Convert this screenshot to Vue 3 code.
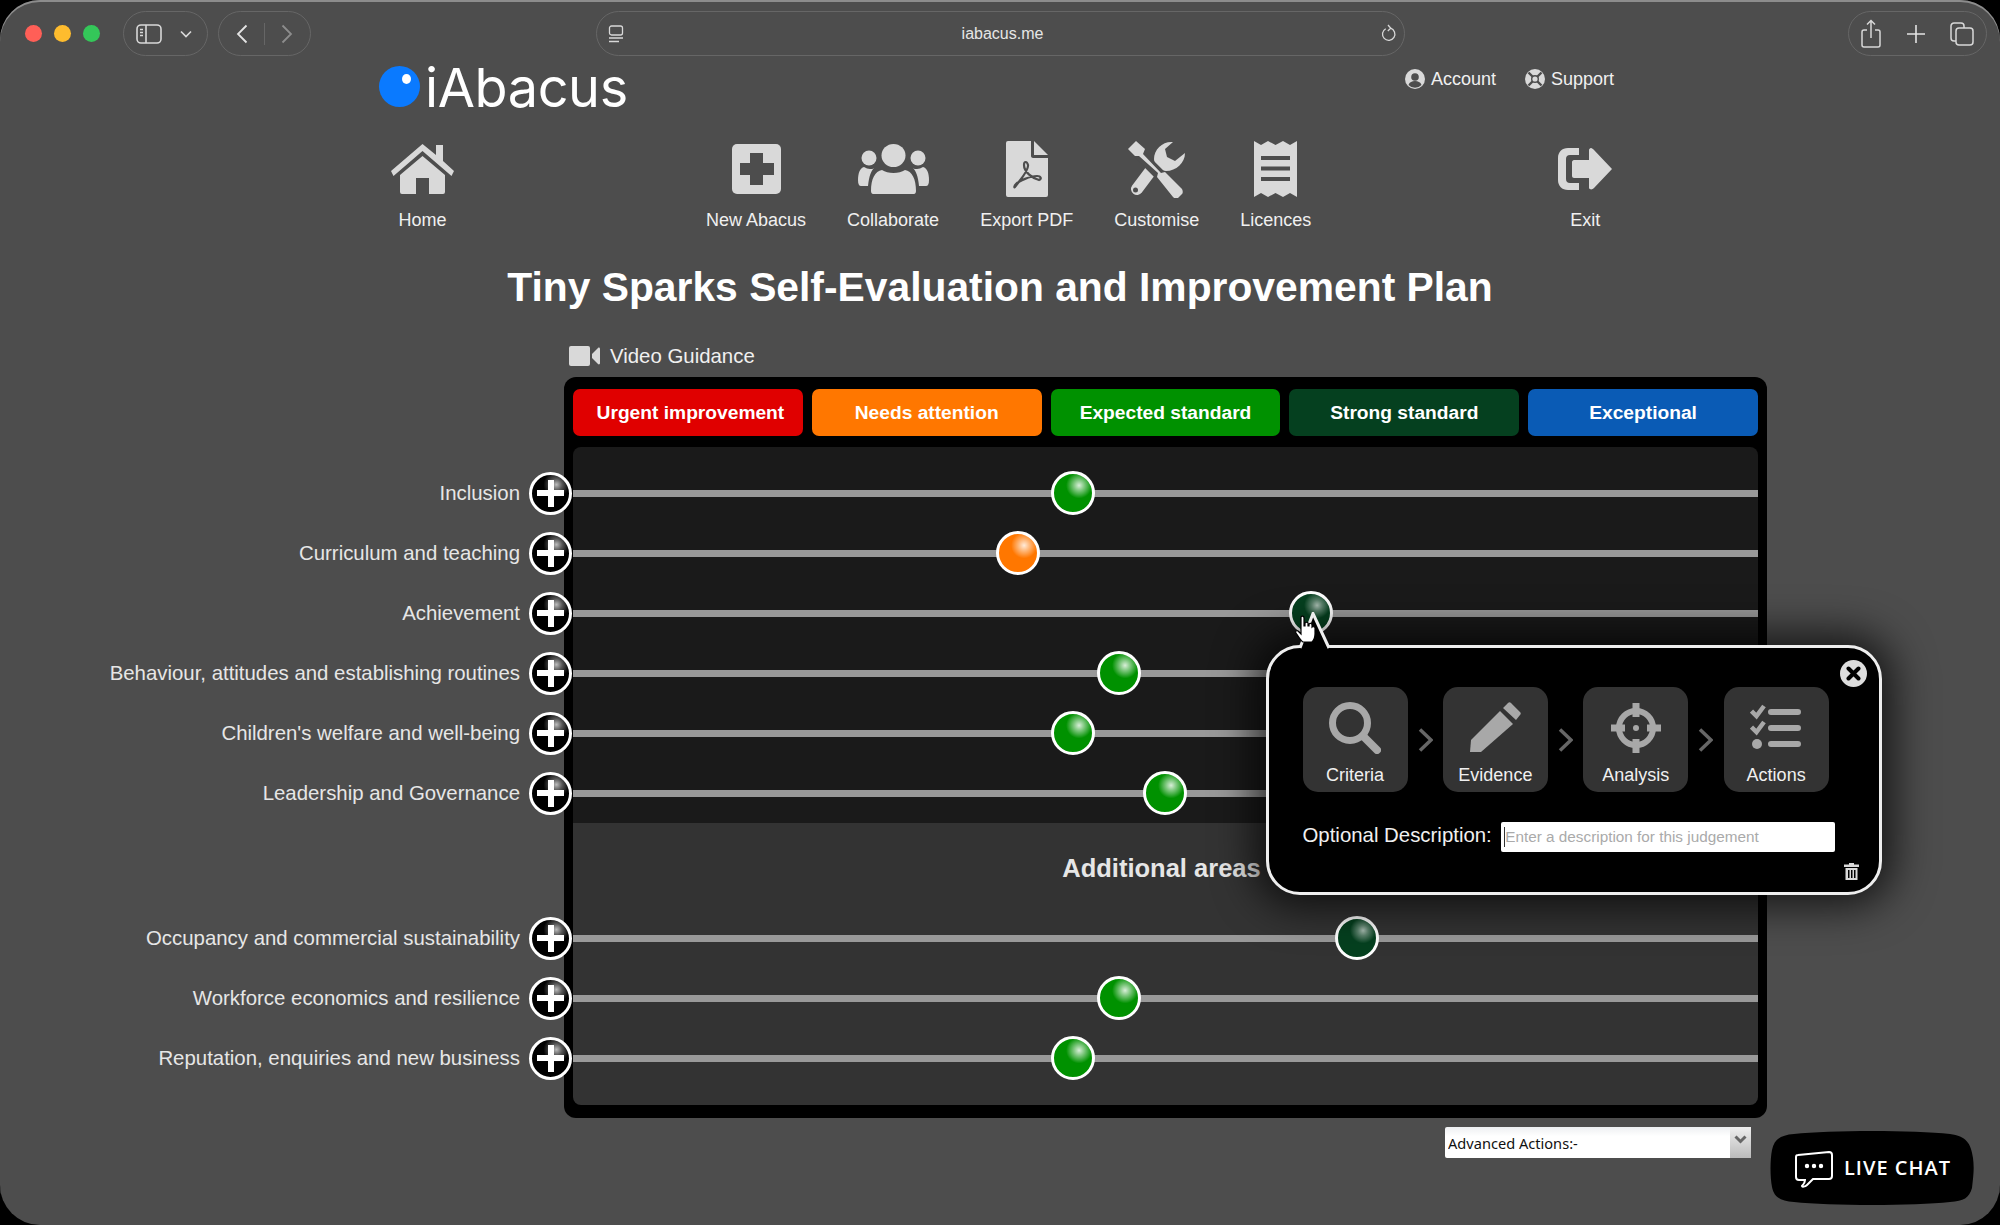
<template>
  <div class="window">
    <header class="toolbar">
      <div class="lights">
        <span class="light red"></span>
        <span class="light yellow"></span>
        <span class="light green"></span>
      </div>
      <div class="pill pill-sidebar">
        <svg width="26" height="22" viewBox="0 0 26 22" fill="none" stroke="#d8d8d8" stroke-width="1.6">
          <rect x="1" y="2" width="24" height="18" rx="4" />
          <path d="M10 2v18" />
          <path d="M4 6.500h3M4 9.500h3M4 12.500h3" stroke-width="1.4" />
        </svg>
        <svg width="12" height="8" viewBox="0 0 12 8" fill="none" stroke="#d8d8d8" stroke-width="1.7">
          <path d="M1 1.500l5 5 5-5" />
        </svg>
      </div>
      <div class="pill pill-nav">
        <svg width="12" height="20" viewBox="0 0 12 20" fill="none" stroke="#e4e4e4" stroke-width="1.8">
          <path d="M10.500 1.500L2 10l8.500 8.500" />
        </svg>
        <span class="pill-sep"></span>
        <svg width="12" height="20" viewBox="0 0 12 20" fill="none" stroke="#8d8d8d" stroke-width="1.8">
          <path d="M1.500 1.500L10 10l-8.500 8.500" />
        </svg>
      </div>
      <div class="pill pill-url">
        <svg width="16" height="18" viewBox="0 0 16 18" fill="none" stroke="#d8d8d8" stroke-width="1.300">
          <rect x="1.500" y="1" width="13" height="9" rx="2" />
          <path d="M1 13h14M1 16.500h10" />
        </svg>
        <span class="url-text">iabacus.me</span>
        <svg width="16" height="19" viewBox="0 0 16 19" fill="none" stroke="#d8d8d8" stroke-width="1.300">
          <path d="M9.500 4.200a6.200 6.200 0 1 1-4.800.5" />
          <path d="M7 1l2.800 3.200L6.800 7" />
        </svg>
      </div>
      <div class="pill pill-actions">
        <svg width="20" height="30" viewBox="0 0 20 30" fill="none" stroke="#d8d8d8" stroke-width="1.500">
          <path d="M6 11H3a2 2 0 0 0-2 2v13a2 2 0 0 0 2 2h14a2 2 0 0 0 2-2V13a2 2 0 0 0-2-2h-3" />
          <path d="M10 19V2M6 5.500L10 1.500l4 4" />
        </svg>
        <svg width="20" height="20" viewBox="0 0 20 20" fill="none" stroke="#e4e4e4" stroke-width="1.600">
          <path d="M10 1v18M1 10h18" />
        </svg>
        <svg width="24" height="24" viewBox="0 0 24 24" fill="none" stroke="#d8d8d8" stroke-width="1.500">
          <path d="M6 19H4a3 3 0 0 1-3-3V4a3 3 0 0 1 3-3h7a3 3 0 0 1 3 3v2" />
          <rect x="6" y="6" width="17" height="17" rx="3" />
        </svg>
      </div>
    </header>

    <div class="brand-row">
      <div class="logo">
        <span class="logo-dot"></span>
        <span class="logo-text">iAbacus</span>
      </div>
      <div class="top-links">
        <a class="top-link">
          <svg width="20" height="20" viewBox="0 0 20 20">
            <circle cx="10" cy="10" r="10" fill="#d9d9d9" />
            <circle cx="10" cy="8" r="3.800" fill="#4d4d4d" />
            <path d="M3.500 16c1-3 3.500-4 6.500-4s5.500 1 6.500 4a9 9 0 0 1-13 0z" fill="#4d4d4d" />
          </svg>
          Account
        </a>
        <a class="top-link">
          <svg width="20" height="20" viewBox="0 0 20 20">
            <circle cx="10" cy="10" r="10" fill="#d9d9d9" />
            <circle cx="10" cy="10" r="4" fill="#4d4d4d" />
            <circle cx="10" cy="10" r="2.600" fill="#d9d9d9" />
            <path d="M3.500 3.500l4 4M16.500 3.500l-4 4M3.500 16.500l4-4M16.500 16.500l-4-4" stroke="#4d4d4d" stroke-width="2.400" />
          </svg>
          Support
        </a>
      </div>
    </div>

    <nav class="main-nav">
      <a class="nav-item nav-home">
        <svg width="63" height="50" viewBox="0 0 63 50" fill="#d9d9d9">
          <path d="M31.500 0L45 11V1h7v16l11 10-2.500 5L31.500 7 2.500 32 0 27z" />
          <path d="M31.500 12L54 31v17a2 2 0 0 1-2 2H38V34H25v16H11a2 2 0 0 1-2-2V31z" />
        </svg>
        <span>Home</span>
      </a>
      <div class="nav-group">
        <a class="nav-item">
          <svg width="49" height="50" viewBox="0 0 49 50">
            <rect width="49" height="50" rx="5" fill="#d9d9d9" />
            <path d="M18 9h13v10h11v12H31v10H18V31H8V19h10z" fill="#4d4d4d" />
          </svg>
          <span>New Abacus</span>
        </a>
        <a class="nav-item">
          <svg width="71" height="50" viewBox="0 0 71 50" fill="#d9d9d9">
            <ellipse cx="35.500" cy="11.500" rx="12" ry="11.500" />
            <path d="M15 50c-1 0-2-1-2-3 0-12 4-20 11-21 3 2 7 3 11.500 3S44 28 47 26c7 1 11 9 11 21 0 2-1 3-2 3z" />
            <ellipse cx="11" cy="14" rx="7.500" ry="7.500" />
            <ellipse cx="60" cy="14" rx="7.500" ry="7.500" />
            <path d="M0 36c0-7 2-12 6-13 2 1 4 2 6 2 2 0 3 0 4-1-3 3-5 8-6 18H3c-2 0-3-2-3-6z" />
            <path d="M71 36c0-7-2-12-6-13-2 1-4 2-6 2-2 0-3 0-4-1 3 3 5 8 6 18h7c2 0 3-2 3-6z" />
          </svg>
          <span>Collaborate</span>
        </a>
        <a class="nav-item">
          <svg width="42" height="56" viewBox="0 0 42 56">
            <path d="M2 0h23v15c0 1 1 2 2 2h15v37a2 2 0 0 1-2 2H2a2 2 0 0 1-2-2V2a2 2 0 0 1 2-2z" fill="#d9d9d9" />
            <path d="M28 0l14 14H28z" fill="#d9d9d9" />
            <path d="M9 46C13 40 23 30 22 24 21 20 18 20 18 24c0 7 8 13 15 15 3-1 2-4-2-4-7 0-18 5-21 8-2 2-2 4-1 3z" fill="none" stroke="#4d4d4d" stroke-width="2.200" />
          </svg>
          <span>Export PDF</span>
        </a>
        <a class="nav-item">
          <svg width="57" height="56" viewBox="0 0 57 56">
            <path d="M9 48l15-20" stroke="#d9d9d9" stroke-width="12" stroke-linecap="round" />
            <path d="M45 1C35 0 26 8 26 18c0 2 1 4 1 5l6 6c1 0 3 1 5 1 10 0 19-8 19-18l-10 8-8-4-2-8z" fill="#d9d9d9" />
            <circle cx="7.500" cy="49" r="2.500" fill="#4d4d4d" />
            <path d="M10 12l24 24" stroke="#4d4d4d" stroke-width="11" />
            <path d="M0 8L8 0l9 8-2 5 18 19 4-1 17 17c1 2 1 4 0 5l-4 4c-2 1-3 1-5-1L29 36l1-4L11 15H7z" fill="#d9d9d9" />
          </svg>
          <span>Customise</span>
        </a>
        <a class="nav-item">
          <svg width="43" height="56" viewBox="0 0 43 56">
            <path d="M0 0l7 4 7-4 7.500 4L29 0l7 4 7-4v56l-7-4-7 4-7.500-4L14 56l-7-4-7 4z" fill="#d9d9d9" />
            <path d="M7 17h29M7 27.500h29M7 38h29" stroke="#4d4d4d" stroke-width="4" />
          </svg>
          <span>Licences</span>
        </a>
      </div>
      <a class="nav-item nav-exit">
        <svg width="54" height="42" viewBox="0 0 54 42" fill="#d9d9d9">
          <path d="M21 0v7h-9a4 4 0 0 0-4 4v20a4 4 0 0 0 4 4h9v7H10C4 42 0 38 0 32V10C0 4 4 0 10 0z" />
          <path d="M33 0c1 0 2 1 3 2l18 19-18 19c-1 1-3 2-4 1-1 0-1-1-1-2V30H16c-1 0-2-1-2-2V14c0-1 1-2 2-2h15V2c0-1 1-2 2-2z" />
        </svg>
        <span>Exit</span>
      </a>
    </nav>

    <h1 class="plan-title">Tiny Sparks Self-Evaluation and Improvement Plan</h1>

    <div class="video-link">
      <svg width="31" height="20" viewBox="0 0 31 20" fill="#d9d9d9">
        <rect width="21" height="20" rx="2" />
        <path d="M23 8l6-6c1-1 2 0 2 1v14c0 1-1 2-2 1l-6-6z" />
      </svg>
      Video Guidance
    </div>

    <section class="board">
      <div class="scale">
        <div v-for="s in scale" :key="s.label" class="scale-item" :class="s.cls">{{ s.label }}</div>
      </div>

      <div class="tracks tracks-main">
        <div v-for="r in mainRows" :key="r.label" class="row">
          <span class="row-label">{{ r.label }}</span>
          <button class="row-plus"></button>
          <div class="track">
            <span class="knob" :class="r.cls" :style="{ left: r.pos + '%' }"></span>
          </div>
        </div>
      </div>

      <div class="tracks tracks-extra">
        <h2 class="extra-title">Additional areas</h2>
        <div v-for="r in extraRows" :key="r.label" class="row">
          <span class="row-label">{{ r.label }}</span>
          <button class="row-plus"></button>
          <div class="track">
            <span class="knob" :class="r.cls" :style="{ left: r.pos + '%' }"></span>
          </div>
        </div>
      </div>

      <div class="popup">
        <svg class="popup-tail" width="32" height="38" viewBox="0 0 32 38">
          <path d="M1 37L14 1l17 36z" fill="#000" />
          <path d="M1 36L14 1.500 30 36" fill="none" stroke="#eee" stroke-width="3" />
        </svg>
        <svg class="hand" width="22" height="28" viewBox="0 0 22 28">
          <path d="M6 2c1-1.500 3-1 3 1v8l1 0V8c1-1 3-1 3 0v3h1V9c1-1 3-1 3 1v2c1-1 3 0 3 1v6c0 4-2 7-3 8H8c-2-1-5-6-7-9-1-2 1-3 2-2l3 3z" fill="#fff" stroke="#000" stroke-width="1.200" />
        </svg>
        <button class="popup-close">
          <svg width="15" height="15" viewBox="0 0 15 15">
            <path d="M2.500 2.500l10 10M12.500 2.500l-10 10" stroke="#000" stroke-width="4" stroke-linecap="round" />
          </svg>
        </button>

        <div class="steps">
          <a class="step">
            <svg width="52" height="52" viewBox="0 0 52 52" fill="none" stroke="#a8a8a8">
              <circle cx="21" cy="21" r="17.500" stroke-width="7" />
              <path d="M34 34l14 14" stroke-width="8" stroke-linecap="round" />
            </svg>
            <span>Criteria</span>
          </a>
          <svg class="step-arrow" width="15" height="24" viewBox="0 0 15 24" fill="none" stroke="#666" stroke-width="3.500">
            <path d="M2 1.500L13 12 2 22.500" />
          </svg>
          <a class="step">
            <svg width="52" height="52" viewBox="0 0 52 52" fill="#a8a8a8">
              <path d="M12 50H1l1-12L31 9l13 13z" />
              <path d="M34 6l5-5c1-1 2-1 3 0l9 9c1 1 1 2 0 3l-4 5z" />
            </svg>
            <span>Evidence</span>
          </a>
          <svg class="step-arrow" width="15" height="24" viewBox="0 0 15 24" fill="none" stroke="#666" stroke-width="3.500">
            <path d="M2 1.500L13 12 2 22.500" />
          </svg>
          <a class="step">
            <svg width="52" height="52" viewBox="0 0 52 52" fill="none" stroke="#a8a8a8">
              <circle cx="26" cy="26" r="17" stroke-width="6" />
              <path d="M26 1v14M26 37v14M1 26h14M37 26h14" stroke-width="7" />
              <circle cx="26" cy="26" r="3" fill="#a8a8a8" stroke="none" />
            </svg>
            <span>Analysis</span>
          </a>
          <svg class="step-arrow" width="15" height="24" viewBox="0 0 15 24" fill="none" stroke="#666" stroke-width="3.500">
            <path d="M2 1.500L13 12 2 22.500" />
          </svg>
          <a class="step">
            <svg width="52" height="52" viewBox="0 0 52 52" fill="none" stroke="#a8a8a8">
              <path d="M1.500 9l5 5L14 4M1.500 25l5 5 7.500-10" stroke-width="4.500" />
              <circle cx="7" cy="42" r="5" fill="#a8a8a8" stroke="none" />
              <path d="M21 10h27M21 26h27M21 42h27" stroke-width="6" stroke-linecap="round" />
            </svg>
            <span>Actions</span>
          </a>
        </div>

        <div class="desc">
          <label for="desc-input">Optional Description:</label>
          <input id="desc-input" type="text" placeholder="Enter a description for this judgement">
        </div>
        <svg class="trash" width="15" height="18" viewBox="0 0 15 18" fill="#d9d9d9">
          <path d="M0 2.500h5V1h5v1.500h5V5H0z" />
          <path d="M1.500 6h12v12h-12zM4 8v8h1.500V8zm3 0v8h1.500V8zm3 0v8h1.500V8z" fill-rule="evenodd" />
        </svg>
      </div>
    </section>

    <div class="advanced">
      <select class="advanced-select">
        <option>Advanced Actions:-</option>
      </select>
      <span class="advanced-arrow">
        <svg width="13" height="9" viewBox="0 0 13 9" fill="none" stroke="#666" stroke-width="3">
          <path d="M1.500 1.500l5 5 5-5" />
        </svg>
      </span>
    </div>

    <button class="live-chat">
      <svg class="live-chat-bg" width="204" height="76" viewBox="0 0 204 76">
        <path d="M24 4C60 0 144 0 180 4c16 2 21 9 23 24 1 8 1 14-1 30-3 10-8 13-22 14-36 4-120 4-156 0C10 71 4 67 2 57 0 47 0 30 2 20 4 10 10 5 24 4z" fill="#000" />
      </svg>
      <svg class="live-chat-icon" width="40" height="40" viewBox="0 0 40 40" fill="none" stroke="#fff" stroke-width="2">
        <path d="M4 7l31-3c2 0 3 1 3 3v21c0 2-1 3-3 3H19l-6 6c-2 2-5 2-5 1 1-1 3-3 3-6H5c-2 0-3-1-3-3V9c0-1 1-2 2-2z" />
        <circle cx="13" cy="18" r="1.200" fill="#fff" />
        <circle cx="20" cy="18" r="1.200" fill="#fff" />
        <circle cx="27" cy="18" r="1.200" fill="#fff" />
      </svg>
      <span class="live-chat-text">LIVE CHAT</span>
    </button>
  </div>
</template>

<script setup>
const scale = [
  { label: 'Urgent improvement', cls: 'is-red' },
  { label: 'Needs attention', cls: 'is-orange' },
  { label: 'Expected standard', cls: 'is-green' },
  { label: 'Strong standard', cls: 'is-dark' },
  { label: 'Exceptional', cls: 'is-blue' }
]

// pos is the percentage along the 1185px track
const mainRows = [
  { label: 'Inclusion', pos: 42.2, cls: 'is-green' },
  { label: 'Curriculum and teaching', pos: 37.55, cls: 'is-orange' },
  { label: 'Achievement', pos: 62.3, cls: 'is-dark' },
  { label: 'Behaviour, attitudes and establishing routines', pos: 46.1, cls: 'is-green' },
  { label: "Children's welfare and well-being", pos: 42.2, cls: 'is-green' },
  { label: 'Leadership and Governance', pos: 49.95, cls: 'is-green' }
]

const extraRows = [
  { label: 'Occupancy and commercial sustainability', pos: 66.2, cls: 'is-dark' },
  { label: 'Workforce economics and resilience', pos: 46.1, cls: 'is-green' },
  { label: 'Reputation, enquiries and new business', pos: 42.2, cls: 'is-green' }
]
</script>

<style>
html, body {
  margin: 0;
  background: #000;
}
</style>

<style scoped>
.window {
  position: relative;
  height: 1225px;
  overflow: hidden;
  background: #4d4d4d;
  border-radius: 40px;
  box-shadow: inset 0 2px 0 #8c8c8c;
  font-family: "Liberation Sans", Arial, sans-serif;
  color: #f0f0f0;
}

.toolbar {
  display: flex;
  align-items: flex-start;
  height: 55px;
  padding-top: 11px;
}

.lights {
  display: flex;
  gap: 12px;
  margin: 14px 0 0 25px;
}

.light {
  width: 17px;
  height: 17px;
  border-radius: 50%;
}

.light.red { background: #ff5f57; }
.light.yellow { background: #febc2e; }
.light.green { background: #34c759; }

.pill {
  display: flex;
  align-items: center;
  height: 45px;
  box-sizing: border-box;
  border: 1px solid #666;
  border-radius: 23px;
}

.pill-sidebar {
  width: 85px;
  margin-left: 23px;
  padding: 0 15px 0 12px;
  justify-content: space-between;
}

.pill-nav {
  width: 93px;
  margin-left: 10px;
  padding: 0 17px;
  justify-content: space-between;
}

.pill-sep {
  width: 1px;
  height: 22px;
  background: #666;
}

.pill-url {
  width: 809px;
  margin-left: 285px;
  padding: 0 7px 0 11px;
  justify-content: space-between;
}

.url-text {
  font-size: 16px;
  color: #e6e6e6;
}

.pill-actions {
  width: 139px;
  margin-left: 443px;
  padding: 0 12px;
  justify-content: space-between;
}

.brand-row {
  display: flex;
  height: 74px;
  padding-left: 379px;
}

.logo {
  display: flex;
  align-items: flex-start;
  gap: 5px;
}

.logo-dot {
  position: relative;
  width: 41px;
  height: 41px;
  border-radius: 50%;
  background: #0a7aff;
}

.logo-dot::after {
  content: "";
  position: absolute;
  top: 8px;
  right: 9px;
  width: 9px;
  height: 10px;
  border-radius: 50%;
  background: #fff;
}

.logo-text {
  font-family: Inter, sans-serif;
  font-size: 54px;
  line-height: 44px;
  letter-spacing: -0.4px;
  color: #fff;
}

.top-links {
  display: flex;
  gap: 29px;
  margin: 2px 0 0 auto;
  padding-right: 386px;
}

.top-link {
  display: flex;
  align-items: center;
  gap: 6px;
  height: 22px;
  font-size: 18px;
}

.main-nav {
  display: flex;
  padding-left: 391px;
}

.nav-item {
  display: flex;
  flex-direction: column;
  align-items: center;
  font-size: 18px;
}

.nav-item svg {
  height: 58px;
  margin-bottom: 11px;
}

.nav-item span {
  line-height: 22px;
}

.nav-group {
  display: flex;
  gap: 41px;
  margin-left: 252px;
}

.nav-exit {
  margin-left: 247px;
}

.plan-title {
  margin: 33px 0 0;
  font-size: 40.8px;
  line-height: 46px;
  text-align: center;
  color: #fff;
}

.video-link {
  display: flex;
  align-items: center;
  gap: 10px;
  height: 26px;
  margin: 33px 0 0 569px;
  font-size: 20.4px;
}

.board {
  position: relative;
  width: 1185px;
  margin: 8px 0 0 564px;
  padding: 12px 9px 13px;
  background: #000;
  border-radius: 12px;
}

.scale {
  display: flex;
  gap: 9px;
  margin-bottom: 11px;
}

.scale-item {
  flex: 1;
  height: 47px;
  line-height: 47px;
  border-radius: 7px;
  text-align: center;
  font-size: 19.2px;
  font-weight: bold;
  color: #fff;
}

.scale-item.is-red {
  text-indent: 5px;
  background: #e00000;
}
.scale-item.is-orange { background: #ff7700; }
.scale-item.is-green { background: #009100; }
.scale-item.is-dark { background: #05401f; }
.scale-item.is-blue { background: #0a5bb5; }

.tracks-main {
  padding-top: 16px;
  background: #1a1a1a;
  border-radius: 8px 8px 0 0;
}

.tracks-extra {
  padding-bottom: 17px;
  background: #333;
  border-radius: 0 0 8px 8px;
}

.extra-title {
  margin: 0;
  height: 85px;
  padding-right: 8px;
  font-size: 25.5px;
  line-height: 90px;
  text-align: center;
  color: #e6e6e6;
}

.row {
  display: flex;
  align-items: center;
  height: 60px;
  margin-left: -573px;
}

.row-label {
  width: 520px;
  font-size: 20.4px;
  text-align: right;
  color: #e6e6e6;
}

.row-plus {
  position: relative;
  flex: none;
  width: 43px;
  height: 43px;
  margin-left: 9px;
  margin-right: 1px;
  padding: 0;
  box-sizing: border-box;
  border: 3px solid #fff;
  border-radius: 50%;
  background: radial-gradient(circle 13px at 66% 26%, #bbb, #555 45%, #000);
}

.row-plus::before,
.row-plus::after {
  content: "";
  position: absolute;
  background: #fff;
}

.row-plus::before {
  left: 5px;
  right: 5px;
  top: 15.500px;
  height: 6px;
}

.row-plus::after {
  top: 5px;
  bottom: 5px;
  left: 15.500px;
  width: 6px;
}

.track {
  position: relative;
  flex: 1;
  height: 7px;
  background: #999;
}

.knob {
  position: absolute;
  top: 50%;
  width: 44px;
  height: 44px;
  box-sizing: border-box;
  border: 3px solid #fff;
  border-radius: 50%;
  transform: translate(-50%, -50%);
}

.knob.is-green { background: radial-gradient(circle 13px at 66% 30%, rgba(255, 255, 255, .85), rgba(255, 255, 255, .5) 40%, rgba(255, 255, 255, 0)), #009100; }
.knob.is-orange { background: radial-gradient(circle 13px at 66% 30%, rgba(255, 255, 255, .85), rgba(255, 255, 255, .5) 40%, rgba(255, 255, 255, 0)), #ff7700; }
.knob.is-dark { background: radial-gradient(circle 13px at 66% 30%, rgba(255, 255, 255, .65), rgba(255, 255, 255, .35) 40%, rgba(255, 255, 255, 0)), #05401f; }

.popup {
  position: absolute;
  left: 702px;
  top: 268px;
  z-index: 2;
  width: 616px;
  height: 250px;
  box-sizing: border-box;
  padding: 39px 0 0 33.500px;
  background: #000;
  border: 3px solid #eee;
  border-radius: 34px;
  box-shadow: 0 0 40px 12px rgba(0, 0, 0, .7);
}

.popup-tail {
  position: absolute;
  left: 30px;
  top: -36px;
}

.hand {
  position: absolute;
  left: 26px;
  top: -33px;
}

.popup-close {
  position: absolute;
  top: 12px;
  right: 12px;
  display: flex;
  align-items: center;
  justify-content: center;
  width: 27px;
  height: 27px;
  padding: 0;
  border: none;
  border-radius: 50%;
  background: #ddd;
}

.steps {
  display: flex;
  align-items: center;
  gap: 10.200px;
}

.step {
  display: flex;
  flex-direction: column;
  align-items: center;
  box-sizing: border-box;
  width: 105px;
  height: 105px;
  padding-top: 15px;
  background: #333;
  border-radius: 15px;
  font-size: 18px;
}

.step svg {
  margin-bottom: 11px;
}

.desc {
  display: flex;
  align-items: center;
  gap: 9.500px;
  margin-top: 29px;
  font-size: 20.4px;
}

.desc label {
  margin-top: -2px;
}

.desc input {
  width: 334px;
  height: 30px;
  margin-top: 1px;
  box-sizing: border-box;
  padding: 0 0 0 4px;
  border: none;
  border-radius: 2px;
  background: linear-gradient(#333, #333) 3px 5px / 1px 20px no-repeat, #fff;
  font-family: inherit;
  font-size: 15.3px;
}

.desc input::placeholder {
  color: #aaa;
}

.trash {
  position: absolute;
  right: 20px;
  bottom: 12px;
}

.advanced {
  position: relative;
  width: 306px;
  height: 31px;
  margin: 9px 0 0 1445px;
}

.advanced-select {
  appearance: none;
  width: 100%;
  height: 100%;
  padding: 0 3px;
  border: none;
  border-radius: 2px;
  background: linear-gradient(#eef0f2, #fff 30%);
  font-family: "Noto Sans", sans-serif;
  font-size: 14.6px;
  color: #111;
}

.advanced-arrow {
  position: absolute;
  top: 0;
  right: 0;
  display: flex;
  justify-content: center;
  width: 21px;
  height: 100%;
  padding-top: 8px;
  box-sizing: border-box;
  background: linear-gradient(#eee, #bbb);
  pointer-events: none;
}

.live-chat {
  position: absolute;
  right: 26px;
  bottom: 19px;
  display: flex;
  align-items: center;
  gap: 10px;
  width: 204px;
  height: 76px;
  padding: 0 0 0 24px;
  border: none;
  background: none;
  font-family: "Open Sans", sans-serif;
  font-size: 20px;
  font-weight: 600;
  letter-spacing: 1px;
  color: #fff;
}

.live-chat-bg {
  position: absolute;
  left: 0;
  top: 0;
}

.live-chat-icon,
.live-chat-text {
  position: relative;
}

.live-chat-text {
  margin-top: -2px;
}
</style>
